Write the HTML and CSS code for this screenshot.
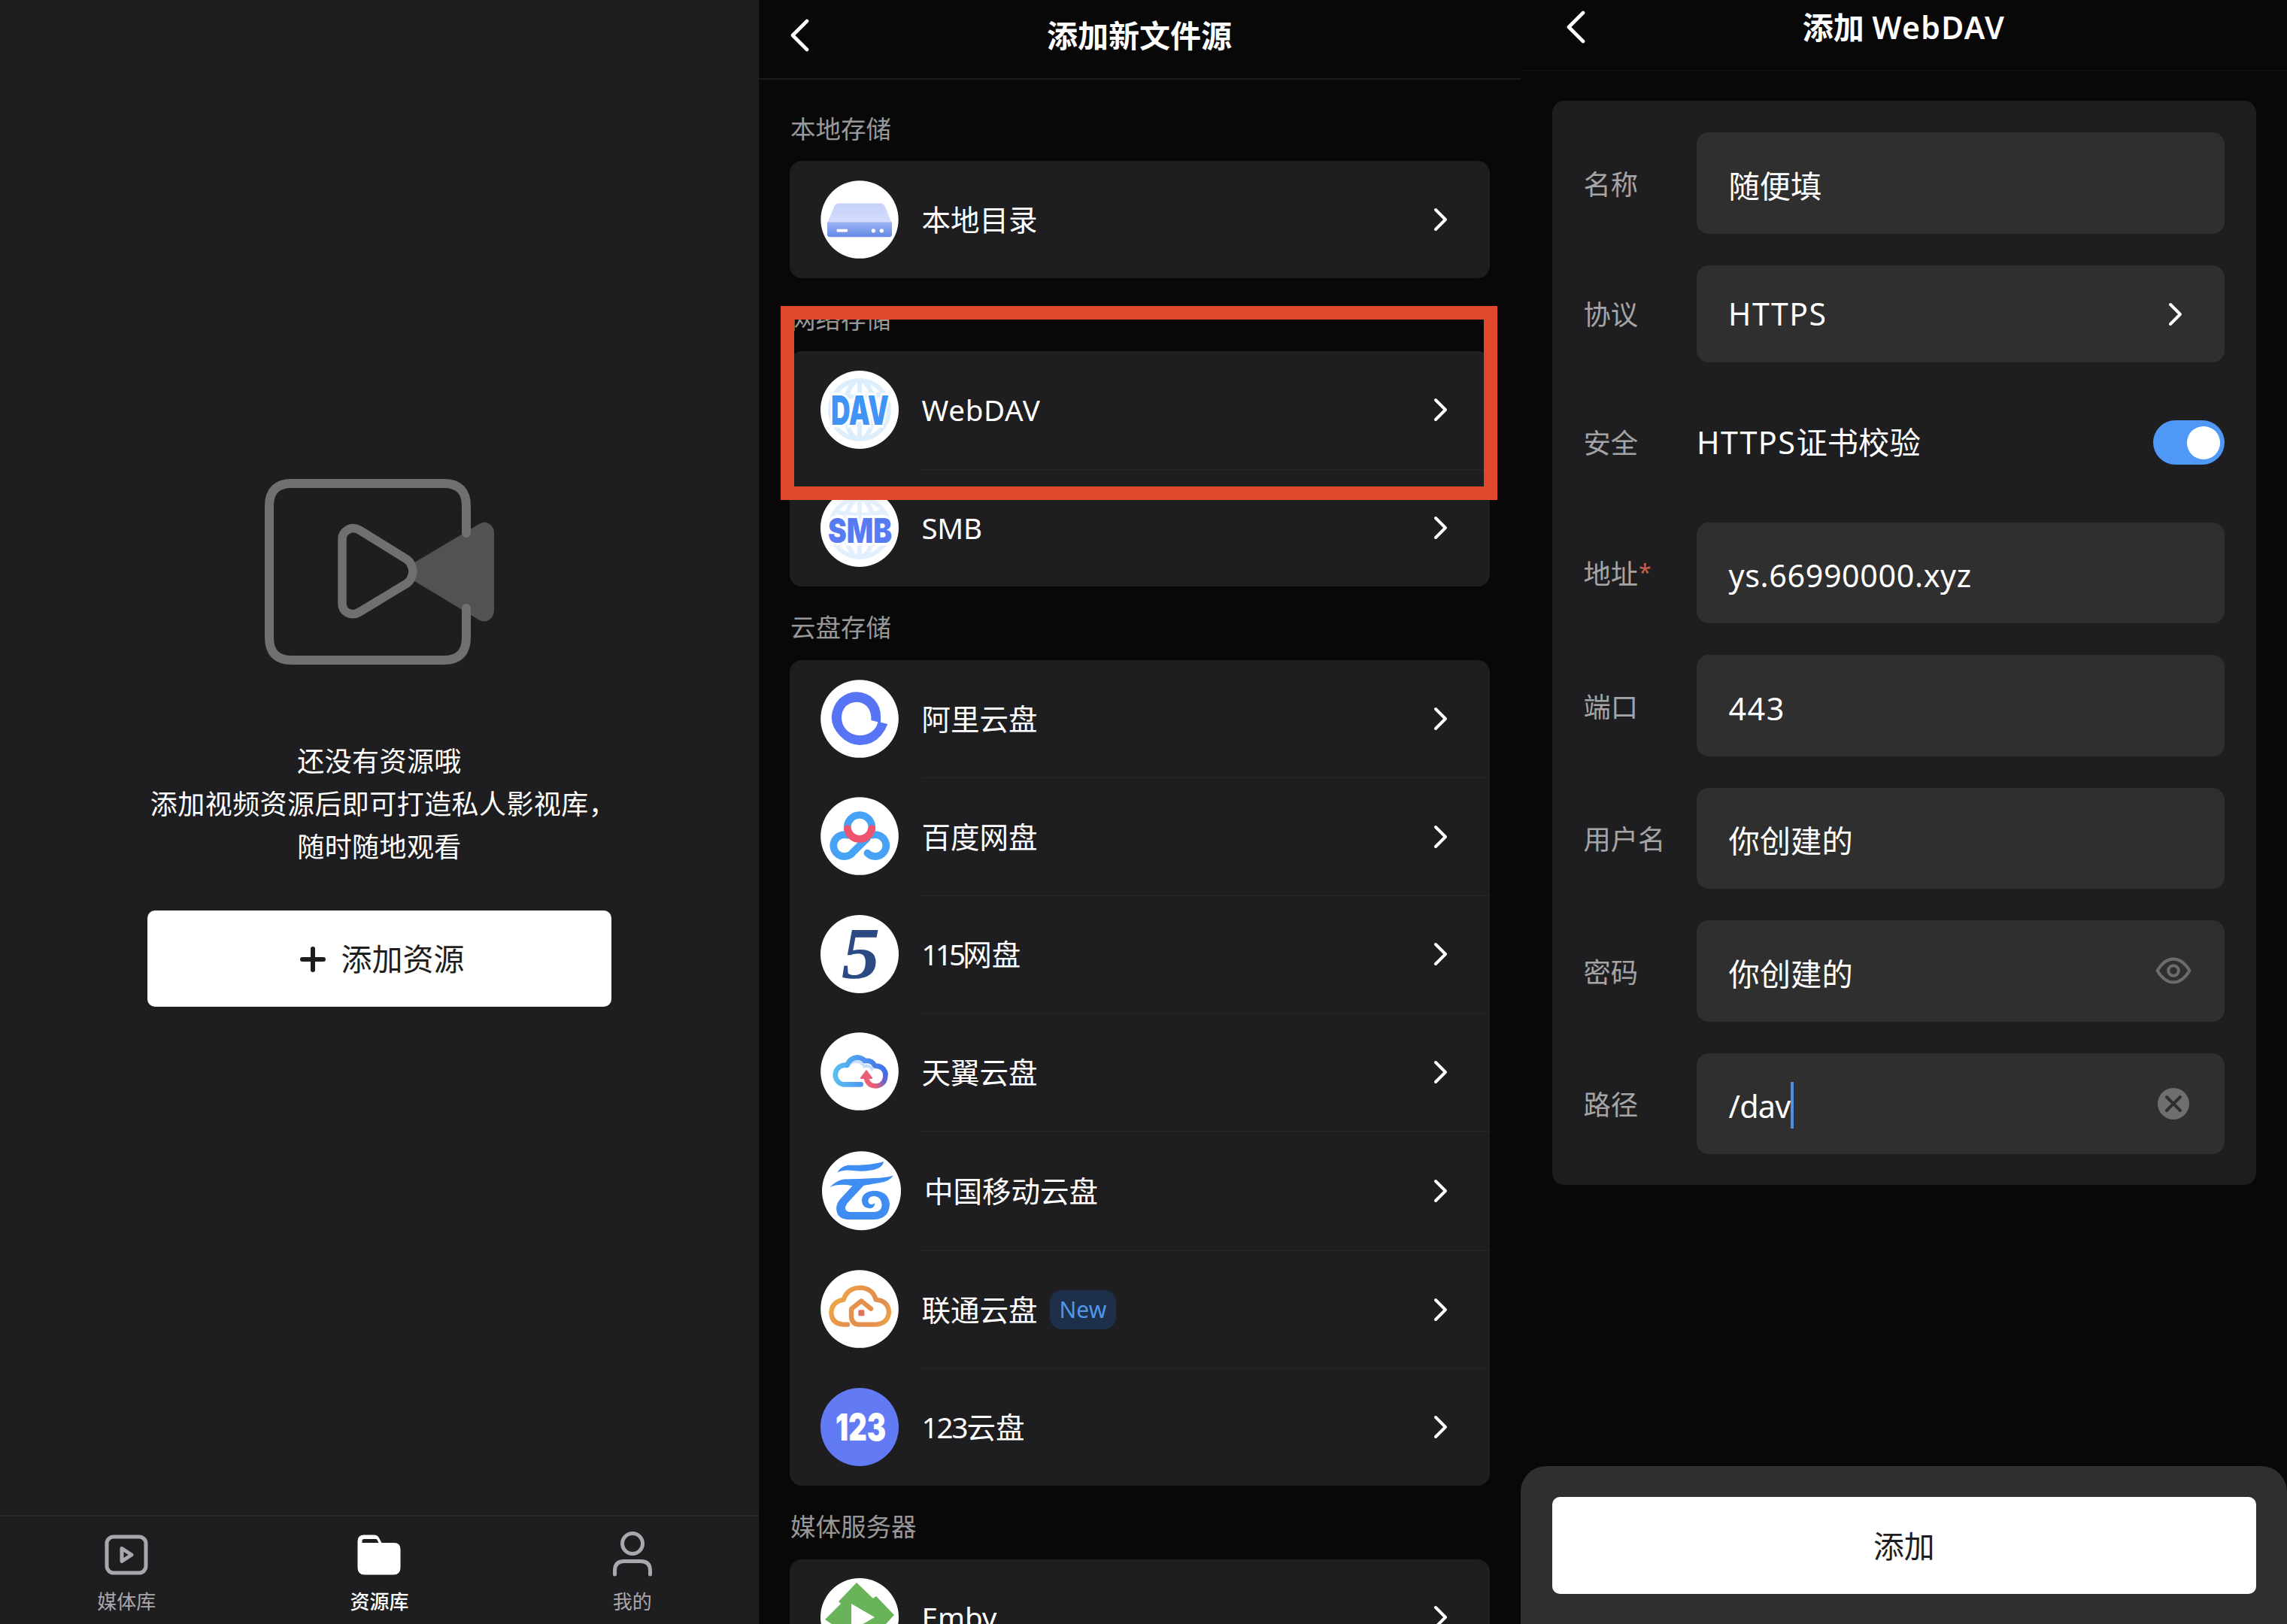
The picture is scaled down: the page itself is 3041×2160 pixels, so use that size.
FILE: index.html
```html
<!DOCTYPE html>
<html lang="zh-CN">
<head>
<meta charset="utf-8">
<title>添加 WebDAV</title>
<link rel="stylesheet" href="styles.css">
</head>
<body>
<svg class="defs" aria-hidden="true">
  <symbol id="chevron" viewBox="0 0 20 32"><path d="M3 3 L16 16 L3 29" fill="none" stroke="#fff" stroke-width="4" stroke-linecap="round" stroke-linejoin="round"/></symbol>
  <symbol id="back" viewBox="0 0 26 44"><path d="M23 3 L4 22 L23 41" fill="none" stroke="#fff" stroke-width="4.6" stroke-linecap="round" stroke-linejoin="round"/></symbol>
  <symbol id="globe" viewBox="0 0 104 104">
    <g fill="none" stroke="currentColor" stroke-width="6">
      <circle cx="52" cy="52" r="39"/><ellipse cx="52" cy="52" rx="19" ry="39"/><path d="M52 13V91M18 30Q52 40 86 30M18 74Q52 64 86 74"/>
    </g>
  </symbol>
</svg>

<main class="screens">
  <section class="screen library">
    <div class="empty">
      <svg class="camera" viewBox="0 0 306 248">
        <path d="M196 113 L285 60 Q293 55 299 60 Q305 64 305 72 V174 Q305 183 299 187 Q292 192 284 187 L196 134Z" fill="#525254"/>
        <path d="M268 72 V36 Q268 6 238 6 H36 Q6 6 6 36 V211 Q6 241 36 241 H238 Q268 241 268 211 V172" fill="none" stroke="#707070" stroke-width="12" stroke-linecap="round"/>
        <path d="M103 80 Q103 72 110 68 Q117 63 126 68 L189 107 Q196 112 197 123 Q196 134 189 139 L126 177 Q118 182 110 178 Q103 174 103 166Z" fill="#1e1e20" stroke="#707070" stroke-width="11.5"/>
      </svg>
      <p class="hint">还没有资源哦<br><span class="long">添加视频资源后即可打造私人影视库，</span><br>随时随地观看</p>
      <div class="add-resource">
        <svg class="plus" viewBox="0 0 34 34"><path d="M17 3V31M3 17H31" stroke="#1e1e20" stroke-width="6" stroke-linecap="round"/></svg>
        <span>添加资源</span>
      </div>
    </div>
    <nav class="tabs">
      <div class="tab">
        <svg viewBox="0 0 64 64"><rect x="6" y="6" width="52" height="48" rx="9" fill="none" stroke="#a9a8ac" stroke-width="5"/><path d="M26 21.500L39 30L26 38.500Z" fill="none" stroke="#a9a8ac" stroke-width="5" stroke-linejoin="round"/></svg>
        <span>媒体库</span>
      </div>
      <div class="tab active">
        <svg viewBox="0 0 64 64"><path fill-rule="evenodd" d="M12 3.500H25Q30 3.500 32 7.500L35.500 14H52Q60.500 14 60.500 23V47Q60.500 56.500 51 56.500H13Q3.500 56.500 3.500 47V12Q3.500 3.500 12 3.500ZM9.500 14H31.500L29.500 10Q29 9 27.500 9H12Q9.500 9 9.500 11.500Z" fill="#fff"/></svg>
        <span>资源库</span>
      </div>
      <div class="tab">
        <svg viewBox="0 0 64 64"><circle cx="32" cy="15" r="13.500" fill="none" stroke="#a9a8ac" stroke-width="5"/><path d="M8.500 56V51Q8.500 38.500 21 38.500H43Q55.500 38.500 55.500 51V56" fill="none" stroke="#a9a8ac" stroke-width="5" stroke-linecap="round"/></svg>
        <span>我的</span>
      </div>
    </nav>
  </section>

  <section class="screen sources">
    <header class="bar"><svg class="back"><use href="#back"/></svg><h1>添加新文件源</h1></header>

    <h2>本地存储</h2>
    <div class="card">
      <div class="row">
        <svg class="logo" viewBox="18 28 312 308" preserveAspectRatio="none">
          <defs>
            <linearGradient id="lid" x2="0" y2="1"><stop stop-color="#c4d0f9"/><stop offset="1" stop-color="#d5dffb"/></linearGradient>
            <linearGradient id="box" x2="0" y2="1"><stop stop-color="#9db4f4"/><stop offset="1" stop-color="#6389e4"/></linearGradient>
          </defs>
          <ellipse cx="174" cy="182" rx="155" ry="153.500" fill="#fff"/>
          <path d="M45 196L73 130Q79 118 92 118H256Q269 118 275 130L303 196Z" fill="url(#lid)"/>
          <path d="M45 192H303V240Q303 251 292 251H56Q45 251 45 240Z" fill="url(#box)"/>
          <rect x="83" y="220" width="43" height="11" rx="3" fill="#fff"/><circle cx="229" cy="226" r="8" fill="#fff"/><circle cx="262" cy="226" r="8" fill="#fff"/>
        </svg>
        <div class="cell"><span>本地目录</span><svg class="chevron"><use href="#chevron"/></svg></div>
      </div>
    </div>

    <h2>网络存储</h2>
    <div class="card">
      <div class="row">
        <svg class="logo dav" viewBox="0 0 104 104">
          <circle cx="52" cy="52" r="52" fill="#fff"/><use href="#globe"/>
          <text class="mark halo" x="14" y="72" textLength="77" lengthAdjust="spacingAndGlyphs" font-size="53" fill="#3f94f5">DAV</text>
        </svg>
        <div class="cell"><span class="webdav-name">WebDAV</span><svg class="chevron"><use href="#chevron"/></svg></div>
      </div>
      <div class="row">
        <svg class="logo smb" viewBox="0 0 104 104">
          <circle cx="52" cy="52" r="52" fill="#fff"/><use href="#globe"/>
          <text class="mark halo" x="10" y="71.500" textLength="85" lengthAdjust="spacingAndGlyphs" font-size="46" fill="#587af3">SMB</text>
        </svg>
        <div class="cell"><span class="smb-name">SMB</span><svg class="chevron"><use href="#chevron"/></svg></div>
      </div>
    </div>

    <h2>云盘存储</h2>
    <div class="card">
      <div class="row">
        <svg class="logo" viewBox="18 39 312 312">
          <circle cx="174" cy="195" r="155.500" fill="#fff"/>
          <path d="M286 216Q266 269 221 291Q200 300 175 300Q129 298 96 263Q63 230 62 189Q65 145 94 115Q125 88 162 88Q204 89 232 118Q258 146 258 186V209ZM247 208L220 201V187Q218 161 202 144Q184 128 161 128Q137 129 120 144Q102 163 102 190Q102 220 122 240Q145 262 176 262Q208 261 230 240Q243 227 247 208Z" fill="#5674f4" fill-rule="evenodd"/>
        </svg>
        <div class="cell"><span>阿里云盘</span><svg class="chevron"><use href="#chevron"/></svg></div>
      </div>
      <div class="row">
        <svg class="logo" viewBox="18 509 312 312">
          <circle cx="174" cy="665" r="155.500" fill="#fff"/>
          <g fill="none" stroke="#46a2f5" stroke-width="29" stroke-linecap="round">
            <path d="M204 674L148 729A43.500 43.500 0 1 1 125 661"/>
            <path d="M205 733A43.500 43.500 0 1 0 224 661"/>
            <path d="M125.500 637A49 49 0 1 1 222.500 637"/>
            <path d="M125.500 635A49 49 0 0 0 222.500 635" stroke="#ee5370"/>
          </g>
        </svg>
        <div class="cell"><span>百度网盘</span><svg class="chevron"><use href="#chevron"/></svg></div>
      </div>
      <div class="row">
        <svg class="logo" viewBox="0 0 104 104">
          <circle cx="52" cy="52" r="52" fill="#fff"/>
          <text class="five" x="28" y="84" textLength="51" lengthAdjust="spacingAndGlyphs" font-size="97" fill="#2b4983">5</text>
        </svg>
        <div class="cell"><span><span class="n115">115</span>网盘</span><svg class="chevron"><use href="#chevron"/></svg></div>
      </div>
      <div class="row">
        <svg class="logo" viewBox="18 -112 312 312">
          <defs>
            <linearGradient id="sky" x1="62" x2="287" y1="0" y2="0" gradientUnits="userSpaceOnUse"><stop stop-color="#5cc4ee"/><stop offset=".45" stop-color="#519cf1"/><stop offset="1" stop-color="#426be5"/></linearGradient>
            <linearGradient id="tail" x1="195" x2="282" y1="100" y2="70" gradientUnits="userSpaceOnUse"><stop stop-color="#ec5d76"/><stop offset=".4" stop-color="#ec5d76"/><stop offset="1" stop-color="#4668e5"/></linearGradient>
          </defs>
          <circle cx="174" cy="44" r="155.500" fill="#fff"/>
          <path d="M130 20Q145 2 166 5Q185 8 193 24Q215 18 226 39" fill="none" stroke="#c8dbf8" stroke-width="12"/>
          <path d="M179 96H108A34 34 0 1 1 124 20Q134 -9 164 -12Q184 -11 195 2Q224 -2 235 22Q270 22 277 52" fill="none" stroke="url(#sky)" stroke-width="20" stroke-linecap="round" stroke-linejoin="round"/>
          <path d="M277 50Q280 94 245 102Q207 106 200 68" fill="none" stroke="url(#tail)" stroke-width="19"/>
          <path d="M201 37L226 70Q226 74 221 74H181Q175 74 177 69Z" fill="#ec5d76"/>
        </svg>
        <div class="cell"><span>天翼云盘</span><svg class="chevron"><use href="#chevron"/></svg></div>
      </div>
      <div class="row mobile">
        <svg class="logo" viewBox="24 364 314 314">
          <circle cx="181" cy="522" r="157" fill="#fff"/>
          <path d="M85 449Q98 425 127 420Q190 421 231 414Q258 410 270 405Q265 430 229 439Q190 447 151 442Q111 436 85 449Z" fill="#3f8df3"/>
          <path d="M55 508Q76 483 110 476Q170 476 229 472Q275 471 308 461Q292 485 252 490Q224 494 210 498L190 501L133 562Q117 578 117 590Q117 604 133 606H232Q263 604 262 576Q260 547 232 543Q207 545 208 563Q209 577 221 576Q231 576 234 569Q234 590 216 592Q185 591 182 562Q183 526 230 522Q289 523 293 575Q291 634 232 636H126Q82 633 81 592Q82 573 94 558L145 502Q90 492 55 508Z" fill="#3f8df3"/>
        </svg>
        <div class="cell"><span>中国移动云盘</span><svg class="chevron"><use href="#chevron"/></svg></div>
      </div>
      <div class="row">
        <svg class="logo" viewBox="18 837 312 312">
          <defs><linearGradient id="sun" x1="52" x2="300" y1="900" y2="1064" gradientUnits="userSpaceOnUse"><stop stop-color="#f0b243"/><stop offset=".45" stop-color="#e6914b"/><stop offset=".75" stop-color="#e28e4f"/><stop offset="1" stop-color="#edac42"/></linearGradient></defs>
          <circle cx="174" cy="993" r="155.500" fill="#fff"/>
          <path d="M126 1055H110Q62 1052 61 1006Q63 965 110 956Q124 910 176 908Q226 910 239 956Q288 960 291 1006Q287 1052 239 1055H168Q142 1052 141 1022V993L181 961L219 992" fill="none" stroke="url(#sun)" stroke-width="19" stroke-linejoin="round" stroke-linecap="round"/>
          <rect x="169" y="997" width="24" height="24" rx="4" fill="#dd7658"/>
        </svg>
        <div class="cell"><span>联通云盘</span><em class="badge">New</em><svg class="chevron"><use href="#chevron"/></svg></div>
      </div>
      <div class="row">
        <svg class="logo" viewBox="0 0 104 104">
          <circle cx="52" cy="52" r="52" fill="#627bf5"/>
          <text class="mark" x="20" y="70" textLength="67" lengthAdjust="spacingAndGlyphs" font-size="50" fill="#fff">123</text>
        </svg>
        <div class="cell"><span><span class="n123">123</span>云盘</span><svg class="chevron"><use href="#chevron"/></svg></div>
      </div>
    </div>

    <h2>媒体服务器</h2>
    <div class="card">
      <div class="row">
        <svg class="logo" viewBox="0 0 104 104">
          <circle cx="52" cy="52" r="52" fill="#fff"/>
          <path d="M48 6L70 27L74 24L98 49L74 75L70 71L48 97L27 76L31 72L6 55L27 34L24 31Z" fill="#69b358"/><path d="M41 34L72 52L41 70Z" fill="#fff"/>
        </svg>
        <div class="cell"><span>Emby</span><svg class="chevron"><use href="#chevron"/></svg></div>
      </div>
    </div>
    <div class="highlight"></div>
  </section>

  <section class="screen webdav">
    <header class="bar"><svg class="back"><use href="#back"/></svg><h1>添加 <span class="wide">WebDAV</span></h1></header>
    <div class="form">
      <div class="field"><label>名称</label><div class="input">随便填</div></div>
      <div class="field select"><label>协议</label><div class="input"><span class="https">HTTPS</span><svg class="chevron"><use href="#chevron"/></svg></div></div>
      <div class="field toggle"><label>安全</label><div class="plain"><span><span class="https">HTTPS</span>证书校验</span><i class="switch"></i></div></div>
      <div class="field"><label>地址<sup>*</sup></label><div class="input address">ys.66990000.xyz</div></div>
      <div class="field"><label>端口</label><div class="input port">443</div></div>
      <div class="field"><label>用户名</label><div class="input">你创建的</div></div>
      <div class="field"><label>密码</label><div class="input">你创建的
        <svg class="eye" viewBox="0 0 48 36"><path d="M2.500 18Q12 2.500 24 2.500T45.500 18Q36 33.500 24 33.500T2.500 18Z" fill="none" stroke="#6c6c6c" stroke-width="4" stroke-linejoin="round"/><circle cx="24" cy="18" r="6.800" fill="none" stroke="#6c6c6c" stroke-width="4"/></svg></div></div>
      <div class="field"><label>路径</label><div class="input path">/dav<i class="caret"></i>
        <svg class="clear" viewBox="0 0 42 42"><circle cx="21" cy="21" r="21" fill="#6f6f6f"/><path d="M12 12L30 30M30 12L12 30" stroke="#2f2f2f" stroke-width="4" stroke-linecap="round"/></svg></div></div>
    </div>
    <footer class="sheet"><div class="submit">添加</div></footer>
  </section>
</main>
</body>
</html>
```

FILE: styles.css
```css
* { box-sizing: border-box; }
body {
  margin: 0;
  background: #080808;
  color: #fff;
  font-family: "Noto Sans", "Noto Sans CJK SC", sans-serif;
  font-size: 39px;
  line-height: 1;
}
svg { display: block; flex: none; overflow: visible; }
h1, h2, p { margin: 0; }
.defs { position: absolute; width: 0; height: 0; }
.screens { display: flex; width: 3041px; height: 2160px; overflow: hidden; }
.screen { display: flex; flex-direction: column; flex: none; height: 2160px; overflow: hidden; white-space: nowrap; }

/* Library */
.library { width: 1009px; background: #1e1e20; }
.empty { flex: 1; display: flex; flex-direction: column; align-items: center; padding-top: 637px; }
.camera { width: 306px; height: 248px; }
.hint { margin-top: 99px; text-align: center; font-size: 36px; line-height: 57px; letter-spacing: .43px; }
.long { margin-right: -10px; }
.add-resource {
  display: flex; align-items: center; justify-content: center; gap: 21px;
  width: 617px; height: 128px; margin-top: 56px; padding: 1px 0 0 7px; border-radius: 10px;
  background: #fff; color: #1e1e20; font-size: 41px;
}
.plus { width: 34px; height: 34px; }
.tabs { display: flex; height: 145px; border-top: 2px solid #2a2a2c; }
.tab { flex: 1; display: flex; flex-direction: column; align-items: center; gap: 15px; padding-top: 21px; color: #a9a8ac; font-size: 26px; }
.tab svg { width: 64px; height: 64px; }
.active { color: #fff; font-weight: 500; }

/* Shared header */
.bar { display: grid; grid-template-columns: 60px 1fr 60px; align-items: center; flex: none; }
.bar h1 { font-size: 41px; font-weight: 600; text-align: center; }
.wide { letter-spacing: 1.300px; }
.back { width: 26px; height: 44px; }
.chevron { width: 20px; height: 32px; margin-left: auto; }

/* Sources */
.sources { position: relative; width: 1013px; padding: 0 41px; }
.sources .bar { height: 105.500px; margin: 0 -41px; padding: 0 42px 9px 41px; border-bottom: 2.500px solid #1a1a1b; }
.sources h2 { flex: none; height: 97.500px; padding: 37px 0 0 1px; color: #98989b; font-size: 33.500px; font-weight: 400; line-height: 34px; }
.sources .bar + h2 { height: 108.500px; padding-top: 48px; }
.card { flex: none; border-radius: 16px; background: #1e1e20; overflow: hidden; }
.row { display: flex; height: 156.500px; padding-left: 41px; }
.row:only-child { height: 155.500px; }
.logo { width: 104px; height: 104px; align-self: center; }
.cell { flex: 1; display: flex; align-items: center; margin-left: 30px; padding: 0 55px 0 .500px; font-size: 38.500px; }
.row + .row .cell { border-top: 1.500px solid #27272a; }
.row.mobile { height: 159.500px; padding-left: 42.500px; }
.mobile .logo { width: 105px; height: 105px; }
.mobile .cell { margin-left: 27.500px; padding-left: 4px; }
.badge { margin-left: 16px; padding: 0 13px; border-radius: 16px; background: #1d2f49; color: #5097ec; font-size: 30px; font-style: normal; line-height: 52px; }
.webdav-name { letter-spacing: .700px; }
.smb-name { letter-spacing: -.300px; }
.n115 { letter-spacing: -3.800px; }
.n123 { letter-spacing: -2px; }
.dav { color: #dceefb; }
.smb { color: #e4effd; }
.mark { font-family: Inter, "Noto Sans", sans-serif; font-weight: 900; }
.halo { stroke: #fff; stroke-width: 7px; paint-order: stroke; }
.five { font-family: "Liberation Serif", serif; font-weight: 700; font-style: italic; }
.highlight { position: absolute; left: 29px; top: 407px; width: 953px; height: 258px; border: 18.500px solid #e1472a; }

/* WebDAV form */
.webdav { width: 1019px; }
.webdav .bar { height: 93.500px; padding: 0 42px 20px 60px; grid-template-columns: 42px 1fr 60px; border-bottom: 1.500px solid #161617; }
.form { display: flex; flex-direction: column; gap: 42px; margin: 40.500px 41.500px 0 42px; padding: 42px 41.500px 41px 41.500px; border-radius: 16px; background: #1e1e20; }
.field { display: grid; grid-template-columns: 150.500px 1fr; align-items: center; height: 134.500px; }
.field label { padding-top: 3px; color: #a4a4a6; font-size: 36.300px; }
.field sup { color: #c9604a; font-size: 30px; line-height: 0; vertical-align: 5px; margin-left: 1px; }
.input, .plain { display: flex; align-items: center; height: 100%; font-size: 41.300px; }
.input { padding: 8px 46px 0 42.500px; border-radius: 16px; background: #2f2f2f; }
.address { letter-spacing: .600px; }
.port { letter-spacing: 1.500px; }
.path { letter-spacing: -.700px; }
.https { letter-spacing: 1.500px; }
.select, .toggle { height: 129px; }
.select .input { padding: 1px 55px 0 42px; font-size: 41px; }
.plain { padding-top: 1px; }
.switch { display: flex; justify-content: flex-end; width: 95px; height: 59px; margin-left: auto; padding: 8px 6.500px; border-radius: 30px; background: #4f98f6; }
.switch::after { content: ""; width: 43.500px; height: 43.500px; border-radius: 50%; background: #fff; }
.caret { width: 4px; height: 62px; margin-top: -4px; background: #4f8fe6; }
.eye { width: 48px; height: 36px; margin: -8px -2px 0 auto; }
.clear { width: 42px; height: 42px; margin: -8px 1px 0 auto; }
.sheet { margin-top: auto; height: 210.500px; padding: 41px 41.500px 0 42px; border-radius: 34px 34px 0 0; background: #2f2f2f; }
.submit { display: flex; align-items: center; justify-content: center; height: 129.500px; padding-top: 2px; border-radius: 10px; background: #fff; color: #1e1e20; font-size: 40.800px; }
```
